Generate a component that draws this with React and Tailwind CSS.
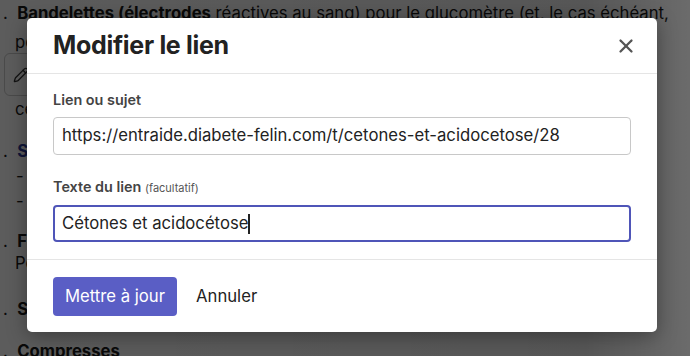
import React from "react";
import { X, Pencil } from "lucide-react";

const font = { fontFamily: "Inter, 'Liberation Sans', sans-serif" };

const Background = () => (
  <div className="w-full h-[356px] bg-white text-[16.7px] leading-[25px] text-[#1a1a1a] overflow-hidden">
    <div className="pl-[3px] pt-[1px] whitespace-nowrap">
      <p>
        .&nbsp;&nbsp;<b>Bandelettes (électrodes</b> réactives au sang) pour le glucomètre (et, le cas échéant,
      </p>
      <p className="pl-[12px] mt-[4px]">pour les cétones)</p>
      <div className="ml-[1px] mt-[-2px] w-[50px] h-[43px] border border-[#ccc] rounded-[6px] flex items-center pl-[8px]">
        <Pencil size={16} className="text-[#333]" />
      </div>
      <p className="pl-[12px] mt-[1px]">cétones</p>
      <p className="mt-[17px]">
        .&nbsp;&nbsp;<b className="text-[#2b3a9a]">Seringues</b>
      </p>
      <p className="pl-[13px]">-</p>
      <p className="pl-[13px]">-</p>
      <p className="mt-[15px]">
        .&nbsp;&nbsp;<b>Flacons</b>
      </p>
      <p className="pl-[12px] mt-[-3px]">Pour</p>
      <p className="mt-[21px]">
        .&nbsp;&nbsp;<b>Stylo</b>
      </p>
      <p className="mt-[17px]">
        .&nbsp;&nbsp;<b>Compresses</b>
      </p>
    </div>
  </div>
);

const Modal = () => (
  <div className="w-[630px] bg-white rounded-[5px] shadow-[0_4px_20px_rgba(0,0,0,0.35)]">
    <div className="h-[56px] flex items-center justify-between pl-[26px] pr-[20px] border-b border-[#e5e5e5]">
      <h2 className="text-[25px] font-bold text-[#222] tracking-[-0.3px]">Modifier le lien</h2>
      <X size={22} strokeWidth={2.5} className="text-[#555]" />
    </div>
    <div className="px-[26px] pt-[17px] pb-[17px]">
      <label className="block text-[14.4px] font-semibold text-[#444] leading-[18px]">Lien ou sujet</label>
      <div className="mt-[8px] h-[38px] border border-[#c8c8c8] rounded-[4px] flex items-center px-[8px] text-[16.7px] text-[#222]">
        https://entraide.diabete-felin.com/t/cetones-et-acidocetose/28
      </div>
      <label className="block mt-[23px] text-[14.4px] font-semibold text-[#444] leading-[18px]">
        Texte du lien <span className="text-[11px] font-normal text-[#555]">(facultatif)</span>
      </label>
      <div className="mt-[8px] h-[37px] border-2 border-[#4f55b8] rounded-[4px] flex items-center px-[7px] text-[16.7px] text-[#222]">
        Cétones et acidocétose
        <span className="inline-block w-[1.5px] h-[20px] bg-[#222]" />
      </div>
    </div>
    <div className="border-t border-[#e5e5e5] px-[26px] pt-[17px] pb-[16px] flex items-center gap-[19px]">
      <button className="h-[39px] px-[12px] rounded-[4px] bg-[#5a5ec5] text-white text-[16.7px]">Mettre à jour</button>
      <button className="text-[16.7px] text-[#222]">Annuler</button>
    </div>
  </div>
);

export default function App() {
  return (
    <div className="relative w-[690px] h-[356px] overflow-hidden" style={font}>
      <Background />
      <div className="absolute inset-0 bg-[linear-gradient(90deg,rgba(0,0,0,0.64)_0%,rgba(0,0,0,0.66)_85%,rgba(0,0,0,0.58)_100%)]" />
      <div className="absolute inset-0 pl-[27px] pt-[18px]">
        <Modal />
      </div>
    </div>
  );
}
